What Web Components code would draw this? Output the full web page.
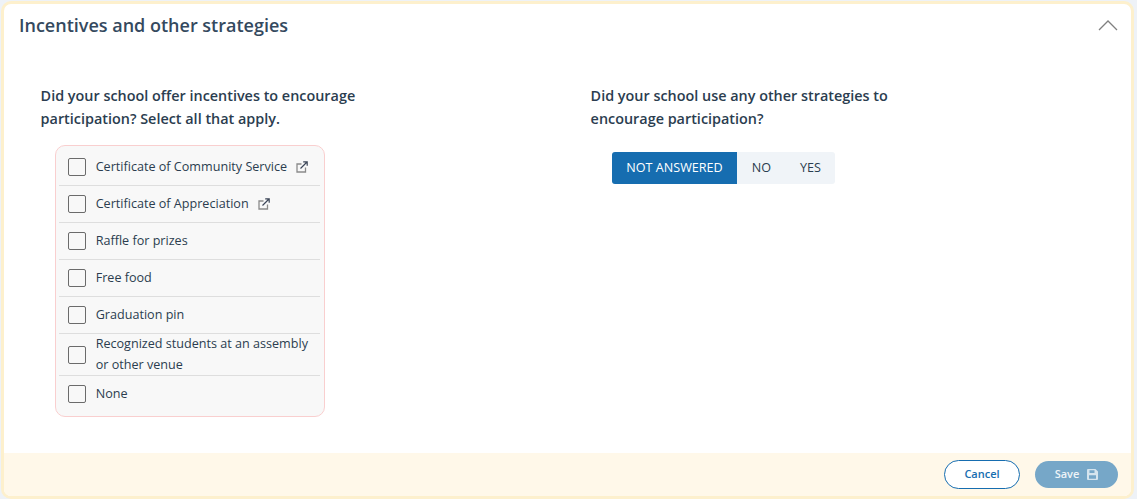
<!DOCTYPE html>
<html>
<head>
<meta charset="utf-8">
<title>Incentives and other strategies</title>
<style>
  html, body { margin: 0; height: 100%; }
  body { background: #eef2f7; font-family: "Open Sans", sans-serif; overflow: hidden; }
</style>
</head>
<body>
<survey-card heading="Incentives and other strategies">
  <div slot="left">
    <question-text>Did your school offer incentives to encourage participation? Select all that apply.</question-text>
    <check-list>
      <check-row link>Certificate of Community Service</check-row>
      <check-row link>Certificate of Appreciation</check-row>
      <check-row>Raffle for prizes</check-row>
      <check-row>Free food</check-row>
      <check-row>Graduation pin</check-row>
      <check-row tall>Recognized students at an assembly or other venue</check-row>
      <check-row last>None</check-row>
    </check-list>
  </div>
  <div slot="right">
    <question-text>Did your school use any other strategies to encourage participation?</question-text>
    <answer-toggle></answer-toggle>
  </div>
</survey-card>

<script>
class SurveyCard extends HTMLElement {
  connectedCallback() {
    this.attachShadow({ mode: 'open' });
    this.shadowRoot.innerHTML = `
      <style>
        :host {
          display: flex;
          flex-direction: column;
          box-sizing: border-box;
          width: 1133px;
          height: 498px;
          margin: 1px 0 0 1px;
          background: #fff;
          border: 3px solid #fdf0cd;
          border-radius: 10px;
          overflow: hidden;
          color: #34495e;
        }
        header {
          display: flex;
          justify-content: space-between;
          align-items: center;
          height: 42px;
          padding: 0 13px 1px 15px;
          box-sizing: border-box;
        }
        h2 {
          margin: 0;
          font-size: 18px;
          font-weight: 600;
          color: #34495e;
        }
        .columns {
          flex: 1;
          display: grid;
          grid-template-columns: 550px 1fr;
          padding: 38px 0 0 36.6px;
        }
        footer {
          display: flex;
          justify-content: flex-end;
          align-items: center;
          gap: 15px;
          height: 43px;
          padding: 0 13px 0 0;
          background: #fff8e9;
        }
        button {
          font-family: inherit;
          font-size: 11px;
          font-weight: 600;
          border-radius: 15px;
          display: flex;
          align-items: center;
          justify-content: center;
          padding: 0 0 2px;
          box-sizing: border-box;
        }
        .cancel {
          width: 76px;
          height: 29px;
          background: #fff;
          border: 1px solid #166db0;
          color: #166db0;
        }
        .save {
          width: 83px;
          height: 27px;
          gap: 8px;
          background: #76a7c8;
          border: 0;
          color: #eef4f8;
        }
        .save svg { margin-top: 1px; }
      </style>
      <header>
        <h2>${this.getAttribute('heading')}</h2>
        <svg width="20" height="12" viewBox="0 0 20 12" fill="none" stroke="#808080" stroke-width="1.3"><path d="M1 11 L10 2 L19 11"/></svg>
      </header>
      <div class="columns">
        <slot name="left"></slot>
        <slot name="right"></slot>
      </div>
      <footer>
        <button class="cancel">Cancel</button>
        <button class="save">Save
          <svg width="11" height="11" viewBox="0 0 11 11"><path fill="#d5e4ee" fill-rule="evenodd" d="M1 0H8.5L11 2.5V10a1 1 0 0 1-1 1H1a1 1 0 0 1-1-1V1a1 1 0 0 1 1-1ZM2.5 1.2V4H7.5V1.2ZM2 6.2V9.8H9V6.2Z"/></svg>
        </button>
      </footer>
    `;
  }
}

class QuestionText extends HTMLElement {
  constructor() {
    super();
    this.attachShadow({ mode: 'open' });
    this.shadowRoot.innerHTML = `
      <style>
        :host {
          display: block;
          width: 330px;
          font-size: 14.4px;
          font-weight: 600;
          line-height: 23px;
          color: #2b3d4f;
        }
      </style>
      <slot></slot>
    `;
  }
}

class CheckList extends HTMLElement {
  constructor() {
    super();
    this.attachShadow({ mode: 'open' });
    this.shadowRoot.innerHTML = `
      <style>
        :host {
          display: block;
          box-sizing: border-box;
          width: 270px;
          height: 272px;
          margin: 15px 0 0 14.4px;
          padding: 3px 4px 0 3px;
          background: #f8f8f8;
          border: 1px solid #f9cfcf;
          border-radius: 10px;
        }
      </style>
      <slot></slot>
    `;
  }
}

class CheckRow extends HTMLElement {
  constructor() {
    super();
    this.attachShadow({ mode: 'open' });
    const link = this.hasAttribute('link');
    this.shadowRoot.innerHTML = `
      <style>
        :host {
          display: flex;
          align-items: center;
          box-sizing: border-box;
          height: 37px;
          padding-left: 9px;
          border-bottom: 1px solid #dedede;
          font-size: 12.6px;
          line-height: 21px;
          color: #2b3d4f;
        }
        :host([tall]) { height: 42px; }
        :host([last]) { border-bottom: 0; height: 36px; }
        .box {
          flex: none;
          box-sizing: border-box;
          width: 18px;
          height: 18px;
          margin-right: 9.7px;
          background: #fff0;
          border: 1px solid #6b6b6b;
          border-radius: 2px;
        }
        .text { min-width: 0; margin-bottom: 2px; }
        svg { flex: none; margin-left: 9px; }
      </style>
      <span class="box"></span>
      <span class="text"><slot></slot></span>
      ${link ? `<svg width="12" height="12" viewBox="0 0 12 12" fill="none">
        <path d="M9.5 6.5V11H1V3H5.5" stroke="#8a8a8a" stroke-width="1.3"/>
        <path d="M4.5 7.5L11 1M7.2 .8H11.2V4.8" stroke="#3c4658" stroke-width="1.2"/>
      </svg>` : ''}
    `;
  }
}

class AnswerToggle extends HTMLElement {
  constructor() {
    super();
    this.attachShadow({ mode: 'open' });
    this.shadowRoot.innerHTML = `
      <style>
        :host {
          display: flex;
          width: 223px;
          height: 32px;
          margin: 22px 0 0 21.4px;
          background: #f0f4f8;
          border-radius: 3px;
          overflow: hidden;
          font-size: 12.6px;
          color: #2b3d4f;
        }
        span {
          display: flex;
          align-items: center;
          justify-content: center;
          padding-bottom: 2px;
          box-sizing: border-box;
        }
        .on { width: 125px; background: #166db0; color: #fff; }
        .no { width: 49px; }
        .yes { width: 49px; }
      </style>
      <span class="on">NOT ANSWERED</span>
      <span class="no">NO</span>
      <span class="yes">YES</span>
    `;
  }
}

customElements.define('survey-card', SurveyCard);
customElements.define('question-text', QuestionText);
customElements.define('check-list', CheckList);
customElements.define('check-row', CheckRow);
customElements.define('answer-toggle', AnswerToggle);
</script>
</body>
</html>
